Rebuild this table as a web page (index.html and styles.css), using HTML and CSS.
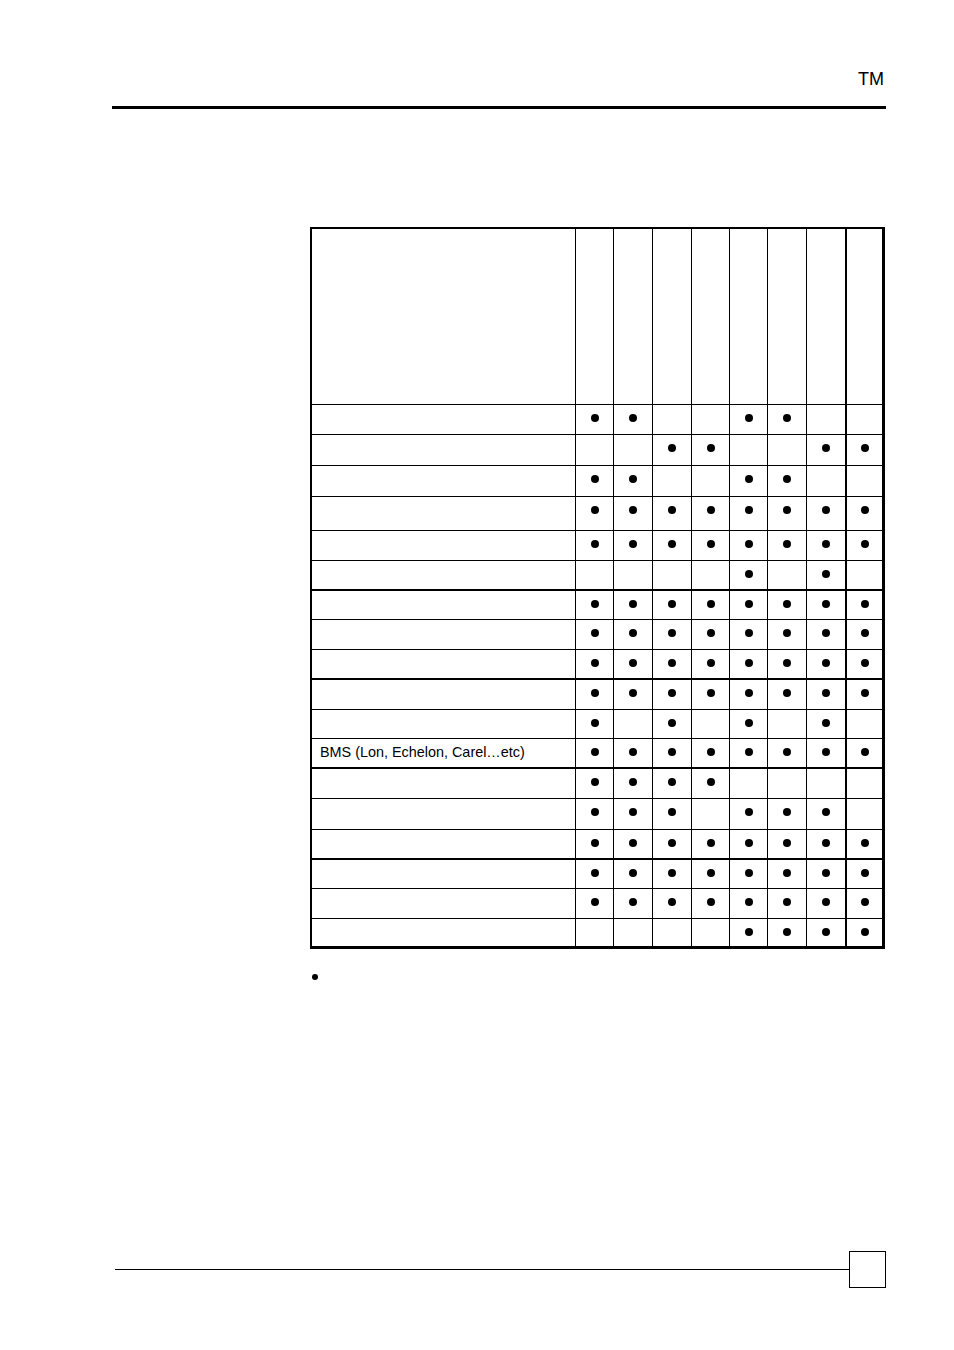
FILE: index.html
```html
<!DOCTYPE html>
<html lang="en">
<head>
<meta charset="utf-8">
<title>Feature table</title>
<link rel="stylesheet" href="styles.css">
</head>
<body>
<div class="page">
  <header class="head">
    <div class="tm">TM</div>
    <div class="rule"></div>
  </header>

  <div class="grid">
    <div class="row head-row"><div class="c lbl"></div><div class="c"></div><div class="c"></div><div class="c"></div><div class="c"></div><div class="c"></div><div class="c"></div><div class="c g"></div><div class="c last"></div></div>
    <div class="row"><div class="c lbl"></div><div class="c"><span class="dot"></span></div><div class="c"><span class="dot"></span></div><div class="c"></div><div class="c"></div><div class="c"><span class="dot"></span></div><div class="c"><span class="dot"></span></div><div class="c g"></div><div class="c last"></div></div>
    <div class="row"><div class="c lbl"></div><div class="c"></div><div class="c"></div><div class="c"><span class="dot"></span></div><div class="c"><span class="dot"></span></div><div class="c"></div><div class="c"></div><div class="c g"><span class="dot"></span></div><div class="c last"><span class="dot"></span></div></div>
    <div class="row"><div class="c lbl"></div><div class="c"><span class="dot"></span></div><div class="c"><span class="dot"></span></div><div class="c"></div><div class="c"></div><div class="c"><span class="dot"></span></div><div class="c"><span class="dot"></span></div><div class="c g"></div><div class="c last"></div></div>
    <div class="row"><div class="c lbl"></div><div class="c"><span class="dot"></span></div><div class="c"><span class="dot"></span></div><div class="c"><span class="dot"></span></div><div class="c"><span class="dot"></span></div><div class="c"><span class="dot"></span></div><div class="c"><span class="dot"></span></div><div class="c g"><span class="dot"></span></div><div class="c last"><span class="dot"></span></div></div>
    <div class="row"><div class="c lbl"></div><div class="c"><span class="dot"></span></div><div class="c"><span class="dot"></span></div><div class="c"><span class="dot"></span></div><div class="c"><span class="dot"></span></div><div class="c"><span class="dot"></span></div><div class="c"><span class="dot"></span></div><div class="c g"><span class="dot"></span></div><div class="c last"><span class="dot"></span></div></div>
    <div class="row thick"><div class="c lbl"></div><div class="c"></div><div class="c"></div><div class="c"></div><div class="c"></div><div class="c"><span class="dot"></span></div><div class="c"></div><div class="c g"><span class="dot"></span></div><div class="c last"></div></div>
    <div class="row"><div class="c lbl"></div><div class="c"><span class="dot"></span></div><div class="c"><span class="dot"></span></div><div class="c"><span class="dot"></span></div><div class="c"><span class="dot"></span></div><div class="c"><span class="dot"></span></div><div class="c"><span class="dot"></span></div><div class="c g"><span class="dot"></span></div><div class="c last"><span class="dot"></span></div></div>
    <div class="row"><div class="c lbl"></div><div class="c"><span class="dot"></span></div><div class="c"><span class="dot"></span></div><div class="c"><span class="dot"></span></div><div class="c"><span class="dot"></span></div><div class="c"><span class="dot"></span></div><div class="c"><span class="dot"></span></div><div class="c g"><span class="dot"></span></div><div class="c last"><span class="dot"></span></div></div>
    <div class="row thick"><div class="c lbl"></div><div class="c"><span class="dot"></span></div><div class="c"><span class="dot"></span></div><div class="c"><span class="dot"></span></div><div class="c"><span class="dot"></span></div><div class="c"><span class="dot"></span></div><div class="c"><span class="dot"></span></div><div class="c g"><span class="dot"></span></div><div class="c last"><span class="dot"></span></div></div>
    <div class="row"><div class="c lbl"></div><div class="c"><span class="dot"></span></div><div class="c"><span class="dot"></span></div><div class="c"><span class="dot"></span></div><div class="c"><span class="dot"></span></div><div class="c"><span class="dot"></span></div><div class="c"><span class="dot"></span></div><div class="c g"><span class="dot"></span></div><div class="c last"><span class="dot"></span></div></div>
    <div class="row"><div class="c lbl"></div><div class="c"><span class="dot"></span></div><div class="c"></div><div class="c"><span class="dot"></span></div><div class="c"></div><div class="c"><span class="dot"></span></div><div class="c"></div><div class="c g"><span class="dot"></span></div><div class="c last"></div></div>
    <div class="row thick"><div class="c lbl">BMS (Lon, Echelon, Carel…etc)</div><div class="c"><span class="dot"></span></div><div class="c"><span class="dot"></span></div><div class="c"><span class="dot"></span></div><div class="c"><span class="dot"></span></div><div class="c"><span class="dot"></span></div><div class="c"><span class="dot"></span></div><div class="c g"><span class="dot"></span></div><div class="c last"><span class="dot"></span></div></div>
    <div class="row"><div class="c lbl"></div><div class="c"><span class="dot"></span></div><div class="c"><span class="dot"></span></div><div class="c"><span class="dot"></span></div><div class="c"><span class="dot"></span></div><div class="c"></div><div class="c"></div><div class="c g"></div><div class="c last"></div></div>
    <div class="row"><div class="c lbl"></div><div class="c"><span class="dot"></span></div><div class="c"><span class="dot"></span></div><div class="c"><span class="dot"></span></div><div class="c"></div><div class="c"><span class="dot"></span></div><div class="c"><span class="dot"></span></div><div class="c g"><span class="dot"></span></div><div class="c last"></div></div>
    <div class="row thick"><div class="c lbl"></div><div class="c"><span class="dot"></span></div><div class="c"><span class="dot"></span></div><div class="c"><span class="dot"></span></div><div class="c"><span class="dot"></span></div><div class="c"><span class="dot"></span></div><div class="c"><span class="dot"></span></div><div class="c g"><span class="dot"></span></div><div class="c last"><span class="dot"></span></div></div>
    <div class="row"><div class="c lbl"></div><div class="c"><span class="dot"></span></div><div class="c"><span class="dot"></span></div><div class="c"><span class="dot"></span></div><div class="c"><span class="dot"></span></div><div class="c"><span class="dot"></span></div><div class="c"><span class="dot"></span></div><div class="c g"><span class="dot"></span></div><div class="c last"><span class="dot"></span></div></div>
    <div class="row"><div class="c lbl"></div><div class="c"><span class="dot"></span></div><div class="c"><span class="dot"></span></div><div class="c"><span class="dot"></span></div><div class="c"><span class="dot"></span></div><div class="c"><span class="dot"></span></div><div class="c"><span class="dot"></span></div><div class="c g"><span class="dot"></span></div><div class="c last"><span class="dot"></span></div></div>
    <div class="row end"><div class="c lbl"></div><div class="c"></div><div class="c"></div><div class="c"></div><div class="c"></div><div class="c"><span class="dot"></span></div><div class="c"><span class="dot"></span></div><div class="c g"><span class="dot"></span></div><div class="c last"><span class="dot"></span></div></div>
  </div>

  <div class="note"><span class="bullet"></span></div>

  <footer class="foot">
    <div class="foot-line"></div>
    <div class="page-box"></div>
  </footer>
</div>
</body>
</html>
```

FILE: styles.css
```css
* { box-sizing: border-box; }

html, body {
  margin: 0;
  padding: 0;
  background: #ffffff;
}

body {
  font-family: "Liberation Sans", Arial, sans-serif;
  color: #000000;
}

.page {
  width: 954px;
  height: 1350px;
}

.head {
  margin-left: 112px;
  width: 774px;
  padding-top: 69px;
}

.tm {
  text-align: right;
  font-size: 18px;
  line-height: 20px;
  padding-right: 2px;
}

.rule {
  margin-top: 17px;
  height: 3px;
  background: #000;
}

.grid {
  margin-top: 118px;
  margin-left: 310px;
  width: 575px;
  display: grid;
  grid-template-columns: 264px 38px 39px 39px 38px 38px 39px 40px 38px;
  grid-template-rows: 176px 30px 31px 31px 34px 30px 30px 29px 30px 30px 30px 29px 30px 30px 31px 30px 29px 30px 30px;
  border-left: 2px solid #000;
  border-top: 2px solid #000;
}

.row { display: contents; }

.c {
  border-right: 1px solid #000;
  border-bottom: 1px solid #000;
  display: flex;
  justify-content: center;
  align-items: flex-start;
  padding-top: 9px;
}

.c.g { border-right-width: 2px; }
.c.last { border-right-width: 3px; }

.row.thick > .c { border-bottom-width: 2px; }
.row.end > .c { border-bottom-width: 3px; }

.c.lbl {
  justify-content: flex-start;
  padding: 5px 8px 0 8px;
  font-size: 14.4px;
  line-height: 16px;
}

.head-row > .c { padding-top: 0; }

.dot {
  display: block;
  width: 8px;
  height: 8px;
  border-radius: 50%;
  background: #000;
}

.note {
  margin-top: 25px;
  margin-left: 312px;
  height: 6px;
}

.bullet {
  display: block;
  width: 6px;
  height: 6px;
  border-radius: 50%;
  background: #000;
}

.foot {
  margin-top: 271px;
  margin-left: 115px;
  width: 771px;
  display: flex;
  align-items: center;
}

.foot-line {
  flex: 1;
  height: 1px;
  background: #000;
}

.page-box {
  width: 37px;
  height: 37px;
  border: 1.5px solid #000;
}
```
